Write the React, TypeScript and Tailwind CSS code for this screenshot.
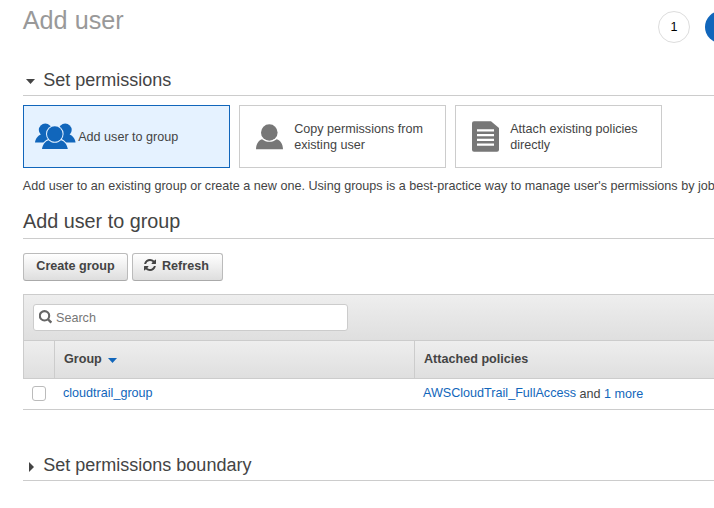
import type { ReactNode } from "react";

const UsersIcon = () => (
  <svg width="41" height="27" viewBox="0 0 41 27" className="shrink-0" fill="#1166bb">
    <circle cx="10.300" cy="7" r="6.500" />
    <circle cx="30.200" cy="7" r="6.500" />
    <path d="M0 19.500C.4 15.500 3 12.500 6 11.500L14 13.500V19.500Z" />
    <path d="M40.500 19.500C40.100 15.500 37.500 12.500 34.500 11.500L26.500 13.500V19.500Z" />
    <circle cx="19.800" cy="11" r="8.800" fill="#e5f2ff" />
    <path d="M5.800 26.500C6.500 20.500 10 17 13.500 16H26.500C29.500 17 33 20.500 33.800 26.500Z" fill="#e5f2ff" />
    <path d="M7 26C7.600 21.500 10.500 18 13.500 17.200C17 20.600 22.500 20.600 26 17.200C29.300 18 32.200 21.500 32.800 26Z" />
    <circle cx="19.800" cy="11" r="7.800" />
  </svg>
);

const UserIcon = () => (
  <svg width="27" height="26" viewBox="0 0 27 26" className="shrink-0" fill="#777">
    <circle cx="13.300" cy="8.500" r="8.300" />
    <path d="M0 25.200C.2 20 2.500 16.300 6 15.300C10.300 18.700 16.500 18.700 20.700 15.300C24.500 16.300 26.800 20 27 25.200Z" />
  </svg>
);

const DocIcon = () => (
  <svg width="27" height="31" viewBox="0 0 27 31" className="shrink-0">
    <path d="M2 .3H19L27 7V28.700Q27 30.700 25 30.700H2Q0 30.700 0 28.700V2.300Q0 .3 2 .3Z" fill="#777" />
    <path d="M5 9.300H22M5 14.100H22M5 18.900H22M5 23.700H22" stroke="#fff" strokeWidth="2.300" />
  </svg>
);

const RefreshIcon = () => (
  <svg width="12" height="12" viewBox="0 0 1536 1536" className="-mt-0.5 shrink-0" fill="#444">
    <path d="M1511 928q0 5-1 7-64 268-268 434.500T764 1536q-146 0-282.500-55T238 1324l-129 129q-19 19-45 19t-45-19-19-45V960q0-26 19-45t45-19h448q26 0 45 19t19 45-19 45l-137 137q71 66 161 102t187 36q134 0 250-65t186-179q11-17 53-117 8-23 30-23h192q13 0 22.500 9.500t9.500 22.500zm25-800v448q0 26-19 45t-45 19h-448q-26 0-45-19t-19-45 19-45l138-138Q969 256 768 256q-134 0-250 65T332 500q-11 17-53 117-8 23-30 23H50q-13 0-22.500-9.500T18 608v-7q65-268 270-434.500T768 0q146 0 284 55.500T1297 212l130-129q19-19 45-19t45 19 19 45z" />
  </svg>
);

function Option({ selected, className, icon, children }: { selected?: boolean; className: string; icon: ReactNode; children: ReactNode }) {
  return (
    <button
      className={`flex h-[63px] w-[207px] items-center border text-left leading-4 ${selected ? "border-[#1166bb] bg-[#e5f2ff]" : "border-[#ccc] bg-white"} ${className}`}
    >
      {icon}
      {children}
    </button>
  );
}

const buttonClass =
  "flex h-7 items-center rounded-[3px] border border-[#bbb] border-b-[#aaa] bg-linear-to-b from-white to-[#dedede] pb-0.5 font-bold";

export default function App() {
  return (
    <div className="h-[508px] w-full overflow-hidden bg-white pl-[23px] font-['Liberation_Sans',Arial,sans-serif] text-[12.6px] leading-4 text-[#444]">
      <header className="flex h-[66px] justify-between">
        <h1 className="-ml-[0.2px] pt-[5px] text-[25.200px] leading-[30px] text-[#999]">Add user</h1>
        <div className="flex w-14 shrink-0 gap-[15px] pt-[11px]">
          <span className="flex size-8 shrink-0 items-center justify-center rounded-full border border-[#ddd] text-[12.600px] text-black">1</span>
          <span className="size-8 shrink-0 rounded-full bg-[#1166bb]" />
        </div>
      </header>

      <h2 className="flex h-[30px] items-center border-b border-[#ccc] pb-0.5 text-[18px] leading-6">
        <svg width="9" height="5" viewBox="0 0 9 5" className="mt-[3px] mr-[8.300px] ml-[3px]"><path d="M0 0H9L4.500 5Z" fill="#444" /></svg>
        Set permissions
      </h2>

      <div className="mt-[9px] flex gap-[9px]">
        <Option selected className="gap-[2.200px] pl-[11px]" icon={<UsersIcon />}>Add user to group</Option>
        <Option className="gap-[11.200px] pl-4" icon={<UserIcon />}>Copy permissions from<br />existing user</Option>
        <Option className="gap-[11.200px] pl-4" icon={<DocIcon />}>Attach existing policies<br />directly</Option>
      </div>

      <p className="mt-2.5 -ml-[0.2px] whitespace-nowrap">
        Add user to an existing group or create a new one. Using groups is a best-practice way to manage user's permissions by job
      </p>

      <h2 className="mt-3 h-[33px] border-b border-[#ccc] pt-[3px] text-[19.800px] leading-6">Add user to group</h2>

      <div className="mt-3.5 flex gap-1">
        <button className={`${buttonClass} w-[105px] justify-center`}>Create group</button>
        <button className={`${buttonClass} w-[91px] gap-1.5 pl-[11px]`}><RefreshIcon />Refresh</button>
      </div>

      <section className="mt-[13px]">
        <div className="h-[47px] border-y border-l border-[#ccc] bg-linear-to-b from-[#eee] to-[#dfdfdf] pt-[9px] pl-[9px]">
          <div className="flex h-[27px] w-[315px] items-center gap-1 rounded-[3px] border border-[#ccc] bg-white pl-[5px] text-[#777]">
            <svg width="13" height="14" viewBox="0 0 13 14" fill="none" stroke="#666" className="-mt-0.5"><circle cx="5.500" cy="5.800" r="4.700" strokeWidth="2.100" /><path d="M8.700 9L12.300 12.600" strokeWidth="2.400" /></svg>
            Search
          </div>
        </div>
        <div className="flex h-[38px] border-b border-l border-[#ccc] bg-linear-to-b from-[#eee] to-[#dfdfdf] font-bold">
          <div className="w-[31px] border-r border-[#ccc]" />
          <div className="flex w-[360px] items-center border-r border-[#ccc] pb-px pl-[9px]">
            Group
            <svg width="9" height="5" viewBox="0 0 9 5" className="mt-0.5 ml-1.5"><path d="M0 0H9L4.500 5Z" fill="#1166bb" /></svg>
          </div>
          <div className="flex items-center pb-px pl-[9px]">Attached policies</div>
        </div>
        <div className="flex h-[31px] border-b border-[#ccc] pt-1.5">
          <div className="w-10 pt-[1px] pl-[9px]">
            <input type="checkbox" className="block h-[15px] w-3.5 appearance-none rounded-[3px] border border-[#bbb] bg-white" />
          </div>
          <div className="w-[360px] text-[#1166bb]">cloudtrail_group</div>
          <div className="flex whitespace-pre">
            <span className="text-[#1166bb]">AWSCloudTrail_FullAccess</span>
            <span className="pt-px"> and <span className="text-[#1166bb]">1 more</span></span>
          </div>
        </div>
      </section>

      <h2 className="mt-[42px] flex h-[29px] items-center border-b border-[#ccc] pb-0.5 text-[18px] leading-6">
        <svg width="5" height="10" viewBox="0 0 5 10" className="mt-1 mr-[9.300px] ml-[6px]"><path d="M0 0L5 5L0 10Z" fill="#444" /></svg>
        Set permissions boundary
      </h2>
    </div>
  );
}
